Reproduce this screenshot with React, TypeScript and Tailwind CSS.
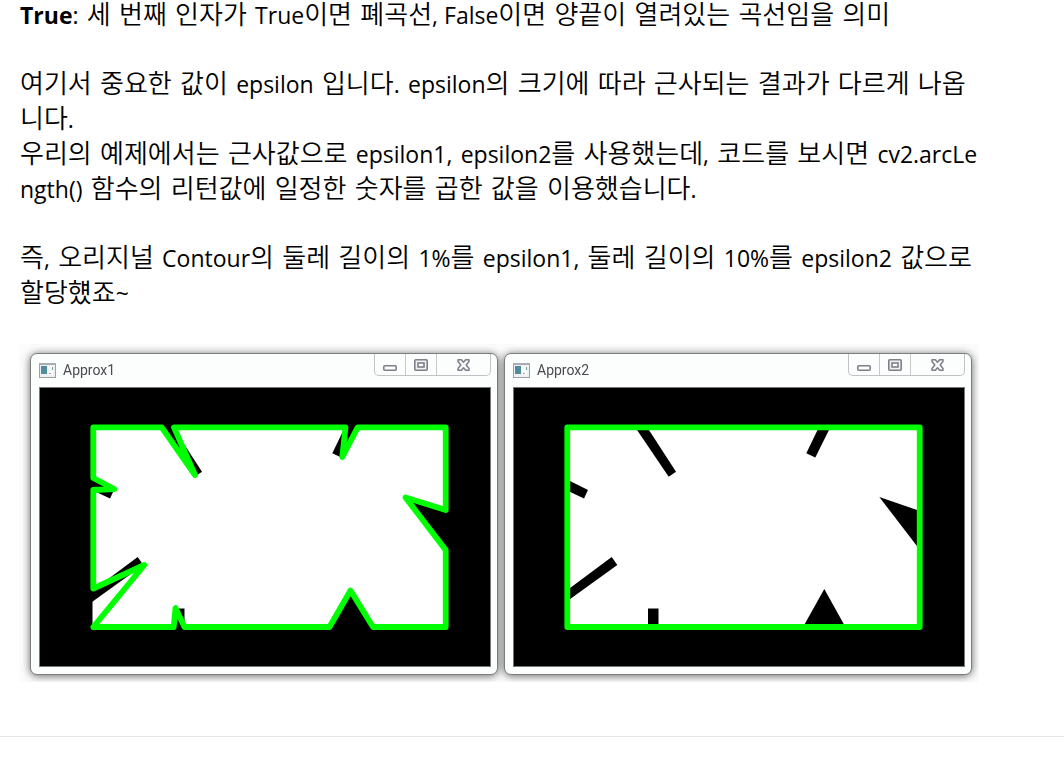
import type { ReactNode } from "react";

function Latin({ children }: { children: ReactNode }) {
  return <span className="font-['Open_Sans',sans-serif] text-[23px] font-normal">{children}</span>;
}

function Line({ children }: { children: ReactNode }) {
  return <span className="block whitespace-nowrap">{children}</span>;
}

function AppIcon() {
  return (
    <svg width="17" height="15" viewBox="0 0 17 15" aria-hidden="true">
      <rect x="0.5" y="0.5" width="16" height="14" fill="#eef1f3" stroke="#9aa0a6" />
      <rect x="0" y="0" width="17" height="2" fill="#a9adb3" />
      <rect x="2" y="3" width="6" height="8" fill="#4f8f95" />
      <rect x="2" y="3" width="3" height="4" fill="#5a7fae" />
      <rect x="9" y="3" width="5" height="9" fill="#fafafa" />
      <rect x="10" y="10" width="2" height="1" fill="#a3a3a3" />
      <rect x="13" y="4" width="1" height="3" fill="#6fa3a3" />
    </svg>
  );
}

function WindowControls() {
  return (
    <div className="flex h-[22px] rounded-b-[5px] border border-t-0 border-[#c0c2c4]">
      <button type="button" aria-label="Minimize" className="flex w-[31px] items-end justify-center border-r border-[#c6c8ca] pb-1">
        <svg width="14" height="6" viewBox="0 0 14 6" aria-hidden="true">
          <rect x="0.8" y="0.8" width="12.4" height="4.4" rx="1" fill="#fdfdfd" stroke="#7f7f8a" strokeWidth="1.6" />
        </svg>
      </button>
      <button type="button" aria-label="Maximize" className="flex w-[31px] items-end justify-center border-r border-[#c6c8ca] pb-1">
        <svg width="14" height="12" viewBox="0 0 14 12" aria-hidden="true">
          <rect x="0.8" y="0.8" width="12.4" height="10.4" rx="1" fill="#f0f0f3" stroke="#7f7f8a" strokeWidth="1.6" />
          <rect x="4" y="4" width="6" height="4" fill="#fdfdfd" stroke="#7f7f8a" strokeWidth="1.6" />
        </svg>
      </button>
      <button type="button" aria-label="Close" className="flex w-[53px] items-end justify-center pb-1">
        <svg width="13" height="12" viewBox="0 0 13 12" aria-hidden="true">
          <path
            d="M1 .8H4.4L6.5 3.2 8.6.8H12V2.6L9.2 6 12 9.4V11.2H8.6L6.5 8.8 4.4 11.2H1V9.4L3.8 6 1 2.6Z"
            fill="#f8f8fa"
            stroke="#7f7f8a"
            strokeWidth="1.5"
            strokeLinejoin="round"
          />
        </svg>
      </button>
    </div>
  );
}

const fullContour =
  "M93.3 427.3H161.7L195 475 174 427.3H345.5L342.3 457 357.7 427.3H445.7V510L405.5 497.5 445.7 550V627H373L350.5 590.5 329.5 627H184.5L175.5 608 173.7 627H93.3L144.3 565 93.3 588.5V490L114.3 489 93.3 478Z";
const boxContour = "M93.3 427.3H445.7V627H93.3Z";

function ImageWindow({ title, contour }: { title: string; contour: string }) {
  return (
    <section className="min-w-0 flex-1 rounded-[7px] border border-[#7b7d7e] bg-[#fcfdfd] pr-1.5 pb-[7px] pl-2">
      <header className="flex h-[33px] items-start justify-between">
        <div className="flex items-center gap-[7px] pt-2">
          <AppIcon />
          <h2 className="font-[Roboto,sans-serif] text-[14px] leading-4 text-[#4a4a50]">{title}</h2>
        </div>
        <WindowControls />
      </header>
      <div className="border border-[#777]">
        <svg viewBox="40 388 450 278" className="block w-full bg-black" role="img" aria-label={title}>
          <rect x="92.5" y="427" width="353" height="200" fill="#fff" />
          <g fill="#000">
            <path d="M161 427H173L202 471.7 194.7 476.7Z" />
            <path d="M345 427H356.5L341.3 457.5 332.3 453.3Z" />
            <path d="M92 479L114 490 110 498.5 92 490Z" />
            <path d="M92 591L137.7 557 143.3 565 92 602Z" />
            <path d="M174 608.5H184.5V628H174Z" />
            <path d="M350.3 589L372 628H328.500Z" />
            <path d="M405.3 497L446 511V550Z" />
          </g>
          <path d={contour} fill="none" stroke="#00ff00" strokeWidth="5.8" strokeLinejoin="round" />
        </svg>
      </div>
    </section>
  );
}

export default function App() {
  return (
    <main className="min-h-screen bg-white text-black">
      <article lang="ko" className="border-b border-[#e5e5e5] px-[19px] pb-[54px]">
        <div className="pl-px font-['DejaVu_Sans','Noto_Sans_CJK_KR',sans-serif] text-[26px] leading-[35px] font-[350]">
          <p className="leading-[30px]">
            <Line>
              <Latin><strong className="font-bold">True</strong>:</Latin> 세 번째 인자가 <Latin>True</Latin>이면 폐곡선<Latin>, False</Latin>이면 양끝이 열려있는 곡선임을 의미
            </Line>
          </p>
          <p className="mt-[37px]">
            <Line>
              여기서 중요한 값이 <Latin>epsilon</Latin> 입니다<Latin>.</Latin> <Latin>epsilon</Latin>의 크기에 따라 근사되는 결과가 다르게 나옵
            </Line>
            <Line>
              니다<Latin>.</Latin>
            </Line>
          </p>
          <p>
            <Line>
              우리의 예제에서는 근사값으로 <Latin>epsilon1,</Latin> <Latin>epsilon2</Latin>를 사용했는데<Latin>,</Latin> 코드를 보시면 <Latin>cv2.arcLe</Latin>
            </Line>
            <Line>
              <Latin>ngth()</Latin> 함수의 리턴값에 일정한 숫자를 곱한 값을 이용했습니다<Latin>.</Latin>
            </Line>
          </p>
          <p className="mt-[34px]">
            <Line>
              즉<Latin>,</Latin> 오리지널 <Latin>Contour</Latin>의 둘레 길이의 <Latin>1%</Latin>를 <Latin>epsilon1,</Latin> 둘레 길이의 <Latin>10%</Latin>를 <Latin>epsilon2</Latin> 값으로
            </Line>
            <Line>
              할당헀죠<Latin>~</Latin>
            </Line>
          </p>
        </div>
        <figure className="mt-[33px] max-w-[960px] overflow-hidden bg-[#fcfcfc] pt-[9px] pr-[7px] pb-[7px] pl-[11px]">
          <div className="flex gap-1.5 drop-shadow-[0_1px_4px_rgba(0,0,0,0.6)]">
            <ImageWindow title="Approx1" contour={fullContour} />
            <ImageWindow title="Approx2" contour={boxContour} />
          </div>
        </figure>
      </article>
    </main>
  );
}
